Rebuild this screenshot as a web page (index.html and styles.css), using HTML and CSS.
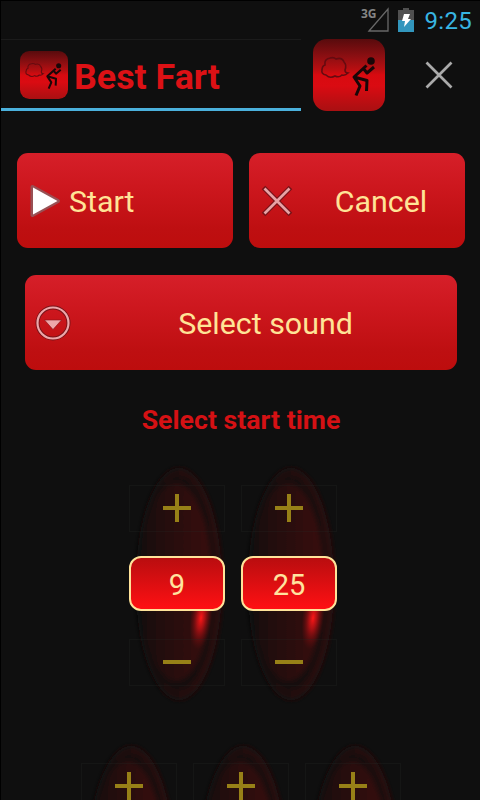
FILE: index.html
```
<!DOCTYPE html>
<html lang="en">
<head>
<meta charset="utf-8">
<title>Best Fart</title>
<link rel="stylesheet" href="styles.css">
</head>
<body>
<svg class="defs" aria-hidden="true">
  <defs>
    <linearGradient id="appRed" x1="0" y1="0" x2="0" y2="1">
      <stop offset="0" stop-color="#580b0d"/><stop offset=".25" stop-color="#8e0f12"/><stop offset=".42" stop-color="#b80e11"/><stop offset=".5" stop-color="#d80a10"/><stop offset=".65" stop-color="#da0b12"/><stop offset="1" stop-color="#a91012"/>
    </linearGradient>
    <linearGradient id="bodyRed" x1="0" y1="0" x2="1" y2="0">
      <stop offset="0" stop-color="#150e0e"/><stop offset=".3" stop-color="#230d0e"/><stop offset=".75" stop-color="#310d0f"/><stop offset="1" stop-color="#380c0e"/>
    </linearGradient>
    <linearGradient id="rimRed" x1="0" y1="0" x2="1" y2="0">
      <stop offset="0" stop-color="#0f0f0f"/><stop offset=".45" stop-color="#1e0d0e"/><stop offset="1" stop-color="#300b0d"/>
    </linearGradient>
    <radialGradient id="flare"><stop offset="0" stop-color="#ff1717"/><stop offset=".35" stop-color="#c51215" stop-opacity=".8"/><stop offset="1" stop-color="#6c0b0d" stop-opacity="0"/></radialGradient>
    <filter id="soft" x="-20%" y="-10%" width="140%" height="120%"><feGaussianBlur stdDeviation="2.600"/></filter>
  </defs>
  <symbol id="app" viewBox="0 0 72 72">
    <rect width="72" height="72" rx="14" fill="url(#appRed)"/>
    <path d="M13 36q-5-1-4-5q0-4 3-5q-1-6 5-7q4-1 6 1q6-2 8 3q3 3 1 8q0 3 3 3q-3 3-6 2q-3 3-7 1q-5 3-9-1z" fill="none" stroke="#650b10" stroke-width="1.600"/>
    <circle cx="58" cy="22" r="3.800" fill="#180708"/>
    <path d="M53.500 26.500L41 38l6 9-4 9.500M41 38l13 3.500-.5 10.500M50 29l4 5 7-6" fill="none" stroke="#180708" stroke-width="3" stroke-linejoin="round"/>
  </symbol>
  <symbol id="capsule" viewBox="0 0 96 246">
    <g filter="url(#soft)">
      <ellipse cx="50" cy="123" rx="43" ry="116" fill="url(#rimRed)"/>
      <ellipse cx="50" cy="122" rx="38" ry="106" fill="#160c0d"/>
      <ellipse cx="47" cy="121" rx="36" ry="99" fill="url(#bodyRed)"/>
    </g>
    <ellipse cx="72" cy="157" rx="11" ry="32" fill="url(#flare)" transform="rotate(7 72 157)"/>
  </symbol>
</svg>
<div class="screen">
  <header class="status">
    <svg class="signal" viewBox="0 0 30 26" width="30" height="26"><text x="1" y="11" class="net">3G</text><path d="M9 24L28 2V24Z" fill="none" stroke="#686868" stroke-width="1.3"/></svg>
    <svg class="battery" viewBox="0 0 16 24" width="16" height="24"><path d="M0 2H5V0H11V2H16V24H0Z" fill="#505050"/><path d="M0 12H16V24H0Z" fill="#3296bd"/><path d="M6 6h6l-2 5h3l-7 8 1-6H4z" fill="#fff"/></svg>
    <time>9:25</time>
  </header>
  <div class="bar">
    <div class="tab"><svg class="logo" width="48" height="48"><use href="#app"/></svg><h1>Best Fart</h1></div>
    <svg class="big" width="72" height="72"><use href="#app"/></svg>
    <svg class="close" width="28" height="28" viewBox="0 0 28 28"><path d="M1.500 1.500L26.500 26.500M26.500 1.500L1.500 26.500" stroke="#aaa" stroke-width="2.700"/></svg>
  </div>
  <div class="actions">
    <button class="btn start"><svg width="32" height="36" viewBox="0 0 32 36"><path d="M3.500 4L29 18 3.500 32Z" fill="#fff" stroke="#985155" stroke-width="4" stroke-linejoin="round"/><path d="M4 4.500L28.500 18 4 31.500Z" fill="#fff"/></svg><span>Start</span></button>
    <button class="btn cancel"><svg width="32" height="32" viewBox="0 0 32 32"><path d="M2.500 2.500L29.500 29.500M29.500 2.500L2.500 29.500" stroke="#761318" stroke-width="5"/><path d="M3.500 3.500L28.500 28.500M28.500 3.500L3.500 28.500" stroke="#e7a2a5" stroke-width="2.700"/></svg><span>Cancel</span></button>
  </div>
  <button class="btn sound"><svg width="36" height="36" viewBox="0 0 36 36"><circle cx="18" cy="18" r="15.500" fill="none" stroke="#761318" stroke-width="4"/><circle cx="18" cy="18" r="15.500" fill="none" stroke="#eda6a9" stroke-width="2.200"/><path d="M9.500 15H26.500L18 24.500Z" fill="#eda6a9" stroke="#861318" stroke-width=".6"/></svg><span>Select sound</span></button>
  <h2>Select start time</h2>
  <div class="pickers">
    <div class="picker"><svg class="capsule"><use href="#capsule"/></svg><div class="step"><svg class="sign" viewBox="0 0 30 30"><path d="M1 15H29M15 1V29"/></svg></div><output>9</output><div class="step"><svg class="sign" viewBox="0 0 30 30"><path d="M1 15H29"/></svg></div></div>
    <div class="picker"><svg class="capsule"><use href="#capsule"/></svg><div class="step"><svg class="sign" viewBox="0 0 30 30"><path d="M1 15H29M15 1V29"/></svg></div><output>25</output><div class="step"><svg class="sign" viewBox="0 0 30 30"><path d="M1 15H29"/></svg></div></div>
  </div>
  <div class="pickers lower">
    <div class="picker"><svg class="capsule"><use href="#capsule"/></svg><div class="step"><svg class="sign" viewBox="0 0 30 30"><path d="M1 15H29M15 1V29"/></svg></div></div>
    <div class="picker"><svg class="capsule"><use href="#capsule"/></svg><div class="step"><svg class="sign" viewBox="0 0 30 30"><path d="M1 15H29M15 1V29"/></svg></div></div>
    <div class="picker"><svg class="capsule"><use href="#capsule"/></svg><div class="step"><svg class="sign" viewBox="0 0 30 30"><path d="M1 15H29M15 1V29"/></svg></div></div>
  </div>
</div>
</body>
</html>
```
FILE: styles.css
```
* { box-sizing: border-box; }
body { margin: 0; background: #0f0f0f; font-family: Roboto, sans-serif; }
svg { display: block; flex: none; }
.defs { position: absolute; width: 0; height: 0; }
.screen { width: 480px; height: 800px; overflow: hidden; display: flex; flex-direction: column; background: #0f0f0f; border-top: 1px solid #000; border-left: 1px solid #000; }
.status { height: 38px; flex: none; display: flex; justify-content: flex-end; align-items: flex-start; padding: 6px 8px 0 0; color: #38b5e2; }
.signal { overflow: visible; }
.net { font: bold 12px "Noto Sans", sans-serif; fill: #858585; }
.battery { margin: 1px 11px 0 8px; }
.status time { font-size: 24px; line-height: 28px; letter-spacing: .3px; }
.bar { height: 72px; flex: none; display: flex; align-items: flex-start; }
.tab { width: 300px; height: 72px; display: flex; align-items: center; padding-left: 19px; border-top: 1px solid #1b1b1b; border-bottom: 3px solid #4bb1dc; }
.logo { margin-top: 2px; }
h1 { margin: 6px 0 0 6px; color: #dc1115; font-size: 35.8px; line-height: 42px; white-space: nowrap; }
.big { margin-left: 12px; }
.close { margin: 22px 0 0 40px; }
.actions { display: flex; gap: 16px; margin: 42px 0 0 16px; flex: none; }
.btn { height: 95px; width: 216px; border: 0; border-radius: 11px; background: linear-gradient(#d61f29, #cd171e 35%, #be0f11 80%, #bd0d0d); color: #ffe497; font: 30.4px/36px Roboto, sans-serif; display: flex; align-items: center; padding: 0 12px; text-align: left; }
.btn span { padding-top: 2px; }
.start span { margin-left: 8px; }
.cancel span { flex: 1; text-align: center; padding-left: 16px; }
.sound { width: 432px; margin: 27px 0 0 24px; flex: none; padding-left: 10px; }
.sound span { flex: 1; text-align: center; padding-left: 15px; }
h2 { margin: 34px 0 0 1px; color: #d51114; font-size: 26.7px; line-height: 32px; text-align: center; flex: none; }
.pickers { display: flex; gap: 16px; height: 246px; margin: 25px 0 0 128px; flex: none; }
.lower { margin: 32px 0 0 80px; }
.picker { width: 96px; height: 246px; display: flex; flex-direction: column; align-items: center; position: relative; padding-top: 24px; }
.capsule { position: absolute; left: 0; top: 0; width: 96px; height: 246px; }
.step { position: relative; width: 96px; height: 47px; border: 1px solid rgba(40, 45, 40, .25); display: flex; justify-content: center; align-items: center; padding-bottom: 2px; }
.sign { width: 30px; height: 30px; fill: none; stroke: #978017; stroke-width: 4px; filter: blur(.4px); }
output { position: relative; width: 96px; height: 55px; margin: 24px 0 28px; border: 2px solid #ffe39a; border-radius: 12px; background: linear-gradient(#b90d0f, #ff1013); color: #ffe49f; font-size: 29px; line-height: 54px; text-align: center; flex: none; }
```
